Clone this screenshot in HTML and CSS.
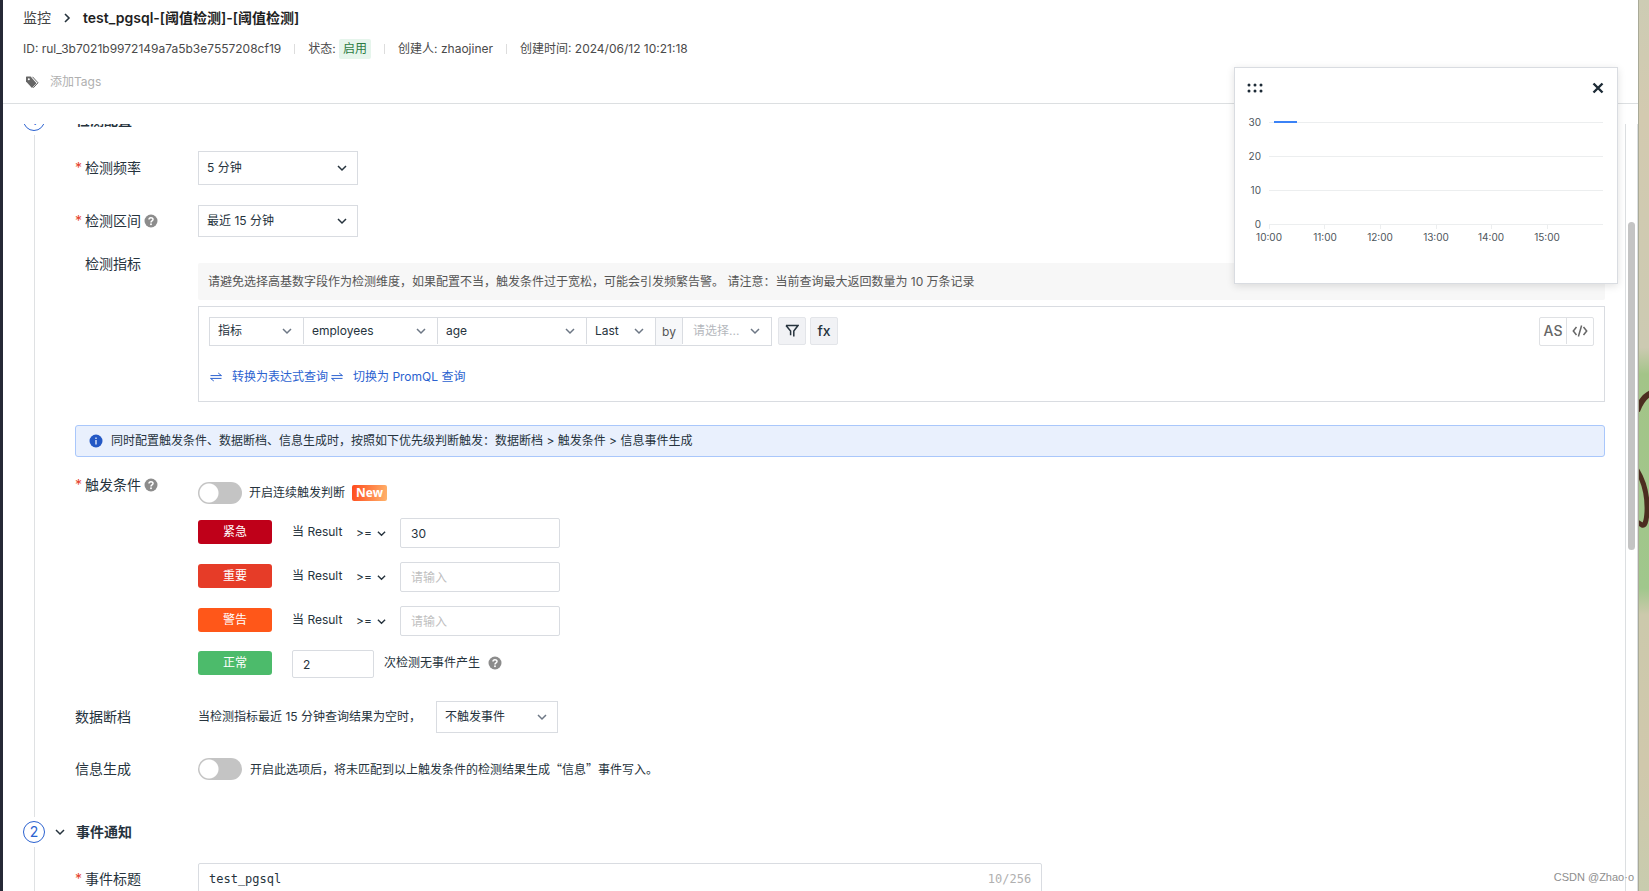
FILE: index.html
```html
<!DOCTYPE html>
<html lang="zh-CN">
<head>
<meta charset="utf-8">
<title>test_pgsql-[阈值检测]-[阈值检测]</title>
<link rel="stylesheet" href="styles.css">
</head>
<body>
<svg class="defs" aria-hidden="true">
  <symbol id="chev" viewBox="0 0 10 10"><path d="M1 3l4 4 4-4" fill="none" stroke="currentColor" stroke-width="1.5"/></symbol>
  <symbol id="help" viewBox="0 0 14 14"><circle cx="7" cy="7" r="6.5" fill="#8c8c8c"/><path d="M5 5.6C5 3.2 9 3.2 9 5.5 9 7 7 6.9 7 8.4" fill="none" stroke="#fff" stroke-width="1.5"/><circle cx="7" cy="10.3" r=".95" fill="#fff"/></symbol>
  <symbol id="swap" viewBox="0 0 12 12"><path d="M.5 4.6h11L8.2 2M11.500 7.400H.5L3.800 10" fill="none" stroke="currentColor" stroke-width="1"/></symbol>
</svg>
<div class="desktop">
  <div class="edge"></div>
  <main class="page">
    <header class="head">
      <nav class="crumbs">
        <a href="#">监控</a>
        <svg class="crumb-arrow" viewBox="0 0 8 12"><path d="M2 2l4 4-4 4" fill="none" stroke="currentColor" stroke-width="1.600"/></svg>
        <h1>test_pgsql-[阈值检测]-[阈值检测]</h1>
      </nav>
      <div class="meta">
        <span>ID: rul_3b7021b9972149a7a5b3e7557208cf19</span>
        <span class="state">状态: <b>启用</b></span>
        <span>创建人: zhaojiner</span>
        <span>创建时间: 2024/06/12 10:21:18</span>
      </div>
      <button class="tags" type="button">
        <svg viewBox="0 0 14 14"><path d="M1 2v4.500l6 6.500 4.500-4.800L5.600 1.500H1.500z" fill="#666"/><path d="M7.500 1.800l5.500 6-4.700 5" fill="none" stroke="#666" stroke-width="1"/><circle cx="3.800" cy="4.300" r="1" fill="#fff"/></svg>
        添加Tags
      </button>
    </header>

    <div class="work">
      <form class="scroller">
        <section class="step">
          <div class="rail"><span class="num">1</span><i></i></div>
          <div class="body">
            <h2><svg class="i10"><use href="#chev"/></svg>检测配置</h2>
            <div class="row freq">
              <label class="req" for="freq">检测频率</label>
              <span class="pick tall"><select id="freq"><option>5 分钟</option></select><svg class="i10"><use href="#chev"/></svg></span>
            </div>
            <div class="row range">
              <label class="req" for="range">检测区间<svg class="help"><use href="#help"/></svg></label>
              <span class="pick"><select id="range"><option>最近 15 分钟</option></select><svg class="i10"><use href="#chev"/></svg></span>
            </div>
            <div class="row top metric">
              <span class="label indent">检测指标</span>
              <div class="metric-body">
                <p class="note">请避免选择高基数字段作为检测维度，如果配置不当，触发条件过于宽松，可能会引发频繁告警。 请注意：当前查询最大返回数量为 10 万条记录</p>
                <div class="query">
                  <div class="query-line">
                    <div class="chain">
                      <span class="pick c1"><select aria-label="类型"><option>指标</option></select><svg class="i10"><use href="#chev"/></svg></span>
                      <span class="pick c2"><select aria-label="指标集"><option>employees</option></select><svg class="i10"><use href="#chev"/></svg></span>
                      <span class="pick c3"><select aria-label="字段"><option>age</option></select><svg class="i10"><use href="#chev"/></svg></span>
                      <span class="pick c4"><select aria-label="聚合"><option>Last</option></select><svg class="i10"><use href="#chev"/></svg></span>
                      <span class="by">by</span>
                      <span class="pick c5"><select aria-label="维度"><option>请选择...</option></select><svg class="i10"><use href="#chev"/></svg></span>
                    </div>
                    <button class="tool" type="button" aria-label="筛选"><svg viewBox="0 0 14 14"><path d="M1 1.500h12L8.800 7v5.500M1 1.500L5.600 7v4.200" fill="none" stroke="currentColor" stroke-width="1.500"/></svg></button>
                    <button class="tool fx" type="button">fx</button>
                    <div class="modes">
                      <button type="button">AS</button>
                      <button type="button" aria-label="代码"><svg viewBox="0 0 16 14"><path d="M4.500 3L1.300 7l3.200 4M11.500 3l3.200 4-3.200 4M9.600 1.500L6.400 12.500" fill="none" stroke="currentColor" stroke-width="1.500"/></svg></button>
                    </div>
                  </div>
                  <div class="links">
                    <a href="#"><svg><use href="#swap"/></svg>转换为表达式查询</a>
                    <a href="#"><svg><use href="#swap"/></svg>切换为 PromQL 查询</a>
                  </div>
                </div>
              </div>
            </div>

            <div class="alert"><svg viewBox="0 0 14 14"><circle cx="7" cy="7" r="6.500" fill="#2458c5"/><path d="M7 6v4.500M7 3.500V5" stroke="#fff" stroke-width="1.200"/></svg>同时配置触发条件、数据断档、信息生成时，按照如下优先级判断触发：数据断档 &gt; 触发条件 &gt; 信息事件生成</div>

            <div class="row top trigger">
              <span class="label req">触发条件<svg class="help"><use href="#help"/></svg></span>
              <div class="rules">
                <div class="toggle"><input class="switch" type="checkbox" role="switch" id="cont"><label for="cont">开启连续触发判断</label><span class="new">New</span></div>
                <div class="rule"><span class="level critical">紧急</span><span class="when">当 Result</span><span class="op"><select aria-label="紧急比较符"><option>&gt;=</option></select><svg class="i10"><use href="#chev"/></svg></span><input class="text" type="text" value="30" aria-label="紧急阈值"></div>
                <div class="rule"><span class="level major">重要</span><span class="when">当 Result</span><span class="op"><select aria-label="重要比较符"><option>&gt;=</option></select><svg class="i10"><use href="#chev"/></svg></span><input class="text" type="text" placeholder="请输入" aria-label="重要阈值"></div>
                <div class="rule"><span class="level warn">警告</span><span class="when">当 Result</span><span class="op"><select aria-label="警告比较符"><option>&gt;=</option></select><svg class="i10"><use href="#chev"/></svg></span><input class="text" type="text" placeholder="请输入" aria-label="警告阈值"></div>
                <div class="rule"><span class="level ok">正常</span><input class="text count" type="text" value="2" id="okn"><label class="after" for="okn">次检测无事件产生<svg class="help"><use href="#help"/></svg></label></div>
              </div>
            </div>

            <div class="row gapdata">
              <label for="nodata">数据断档</label>
              <div class="inline"><span>当检测指标最近 15 分钟查询结果为空时，</span><span class="pick soft"><select id="nodata"><option>不触发事件</option></select><svg class="i10"><use href="#chev"/></svg></span></div>
            </div>
            <div class="row info">
              <span class="label">信息生成</span>
              <div class="toggle"><input class="switch" type="checkbox" role="switch" id="info"><label class="cjk" for="info">开启此选项后，将未匹配到以上触发条件的检测结果生成“信息”事件写入。</label></div>
            </div>
          </div>
        </section>

        <section class="step second">
          <div class="rail"><span class="num">2</span><i></i></div>
          <div class="body">
            <h2><svg class="i10"><use href="#chev"/></svg>事件通知</h2>
            <div class="row">
              <label class="req" for="title">事件标题</label>
              <div class="title-box"><input type="text" id="title" value="test_pgsql"><span>10/256</span></div>
            </div>
          </div>
        </section>
      </form>
      <div class="track"><div class="thumb"></div></div>
    </div>

    <aside class="float">
      <div class="float-bar">
        <svg class="grip" viewBox="0 0 16 10"><g fill="#1d2b36"><circle cx="2" cy="2" r="1.500"/><circle cx="8" cy="2" r="1.500"/><circle cx="14" cy="2" r="1.500"/><circle cx="2" cy="8" r="1.500"/><circle cx="8" cy="8" r="1.500"/><circle cx="14" cy="8" r="1.500"/></g></svg>
        <button type="button" aria-label="关闭"><svg viewBox="0 0 12 12"><path d="M1.500 1.500l9 9M10.500 1.500l-9 9" stroke="#1d2b36" stroke-width="2.400"/></svg></button>
      </div>
      <svg class="chart" viewBox="0 0 360 140" role="img" aria-label="age">
        <g stroke="#eceeef" stroke-width="1"><path d="M22 14.500h334M22 48.500h334M22 82.500h334M22 116.500h334M22.500 116v5M77.500 116v5M133.500 116v5M189.500 116v5M244.500 116v5M300.500 116v5"/></g>
        <path d="M27 14h23" stroke="#3b82f6" stroke-width="2"/>
        <g text-anchor="end"><text x="14" y="18">30</text><text x="14" y="52">20</text><text x="14" y="86">10</text><text x="14" y="120">0</text></g>
        <g text-anchor="middle"><text x="22" y="133">10:00</text><text x="78" y="133">11:00</text><text x="133" y="133">12:00</text><text x="189" y="133">13:00</text><text x="244" y="133">14:00</text><text x="300" y="133">15:00</text></g>
      </svg>
    </aside>
  </main>
  <div class="wallpaper">
    <svg viewBox="0 0 11 160"><path d="M12 9Q3 13-2 27" fill="none" stroke="#4c2d20" stroke-width="6"/><path d="M-2 86Q9 104 8 128Q7 143 3 141Q0 139-2 138" fill="none" stroke="#4c2d20" stroke-width="5"/></svg>
  </div>
  <span class="mark">CSDN @Zhao·o</span>
</div>
</body>
</html>
```
FILE: styles.css
```css
* { box-sizing: border-box; }
body {
  margin: 0;
  color: #26333d;
  font: 12px/20px Inter, "Noto Sans CJK SC", sans-serif;
}
h1, h2, p { margin: 0; }
a { text-decoration: none; }
svg { display: block; flex: none; }
button, input, select { font: inherit; color: inherit; }
button { padding: 0; cursor: pointer; }
.defs { position: absolute; width: 0; height: 0; }
.i10 { width: 10px; height: 10px; }
.help { width: 14px; height: 14px; }

.desktop {
  position: relative;
  display: grid;
  grid-template-columns: 3px 1fr 11px;
  height: 100vh;
  overflow: hidden;
}
.edge { background: #262936; }
.page {
  position: relative;
  display: flex;
  flex-direction: column;
  min-width: 0;
  min-height: 0;
  background: #fff;
}

/* Header */
.head {
  padding: 8px 20px 11px;
  border-bottom: 1px solid #dcdfe1;
}
.crumbs { display: flex; align-items: center; gap: 12px; font-size: 14px; }
.crumbs a { color: #444; }
.crumb-arrow { width: 8px; height: 12px; }
h1 { font-size: 14px; font-weight: 600; color: #1f1f1f; }
.meta { display: flex; margin-top: 11px; color: #4a4a4a; }
.meta span + span { margin-left: 13px; padding-left: 14px; background: linear-gradient(#ddd, #ddd) 0 5px / 1px 10px no-repeat; }
.meta b {
  display: inline-block;
  padding: 0 4px;
  border-radius: 2px;
  background: #e6f5ec;
  color: #2b7a42;
  font-weight: 400;
}
.tags {
  display: flex;
  align-items: center;
  gap: 11px;
  margin-top: 13px;
  padding-left: 2px;
  border: 0;
  background: none;
  color: #b0b0b0;
}
.tags svg { width: 14px; height: 14px; }

/* Scroll area */
.work { display: flex; flex: 1; min-height: 0; margin-top: 20px; }
.scroller {
  flex: 1;
  min-width: 0;
  overflow: hidden;
  padding: 0 20px;
  border-right: 1px solid #dcdfe1;
}
.track { width: 12px; padding: 98px 2px 0; border-right: 1px solid #dcdfe1; }
.thumb { height: 328px; border-radius: 4px; background: #c4c4c4; }

.step { display: grid; grid-template-columns: 22px 1fr; gap: 10px; }
.step:first-child { margin-top: -15px; }
.step:first-child .body { padding-bottom: 40px; }
.rail { display: flex; flex-direction: column; align-items: center; }
.rail i { flex: 1; width: 1px; margin: 4px 0; background: #dfe1e3; }
.num {
  width: 22px;
  height: 22px;
  border: 1px solid #2b62d0;
  border-radius: 50%;
  color: #2b62d0;
  font-size: 14px;
  text-align: center;
}
h2 { display: flex; align-items: center; gap: 11px; font-size: 14px; line-height: 22px; font-weight: 600; }

.row {
  display: grid;
  grid-template-columns: 123px 1fr;
  align-items: center;
  margin-top: 20px;
  padding-left: 20px;
}
.row.top { align-items: start; }
.row > label, .label { display: flex; align-items: center; gap: 3px; font-size: 14px; line-height: 22px; }
.req::before { content: "*"; width: 7px; color: #e5432d; }
.indent { padding-left: 10px; }

.pick { position: relative; display: block; width: 160px; height: 32px; }
.pick.tall { height: 34px; }
.pick select {
  width: 100%;
  height: 100%;
  padding: 0 24px 0 8px;
  border: 1px solid #d9dce1;
  border-radius: 0;
  background: #fff;
  appearance: none;
}
.pick svg { position: absolute; top: calc(50% - 5px); right: 11px; pointer-events: none; }

.row.metric { margin-top: 16px; }
.metric-body { padding-top: 10px; }
.note {
  padding: 9px 10px 8px;
  border-radius: 2px;
  background: #f7f7f7;
  color: #555;
}
.query { margin-top: 6px; padding: 10px 10px 14px; border: 1px solid #d9dce1; }
.query-line { display: flex; gap: 4px; }
.chain { display: flex; margin-right: 2px; border: 1px solid #d9dce1; }
.chain .pick { height: 26px; }
.chain .pick + *, .by + .pick { border-left: 1px solid #d9dce1; }
.chain select { border: 0; }
.chain svg, .soft svg { color: #6d7785; }
.chain .c1 { width: 93px; }
.chain .c2 { width: 134px; }
.chain .c3 { width: 149px; }
.chain .c4 { width: 69px; }
.chain .c5 { width: 89px; color: #b5b8bd; }
.c5 select { padding-left: 10px; }
.by { width: 27px; background: #f7f8fa; color: #555; line-height: 27px; text-align: center; }
.tool {
  display: grid;
  place-items: center;
  width: 28px;
  height: 28px;
  border: 1px solid #e3e5e9;
  border-radius: 2px;
  background: #f1f2f5;
}
.tool svg { width: 14px; height: 14px; }
.fx { font-size: 14px; font-weight: 500; }
.modes { display: flex; margin-left: auto; border: 1px solid #dfe1e4; border-radius: 2px; color: #666; }
.modes button { display: grid; place-items: center; width: 26px; height: 26px; border: 0; background: none; font-size: 14px; font-weight: 500; }
.modes button + button { width: 27px; border-left: 1px solid #dfe1e4; }
.modes svg { width: 16px; height: 14px; }
.links { display: flex; gap: 3px; margin-top: 21px; padding-left: 1px; }
.links a { display: flex; align-items: center; gap: 10px; color: #2b62d0; }
.links svg { width: 12px; height: 12px; }

.alert {
  display: flex;
  align-items: center;
  gap: 8px;
  margin: 23px 0 0 20px;
  padding: 5px 13px;
  border: 1px solid #a9c7fb;
  border-radius: 3px;
  background: #e9f0fd;
}
.alert svg { width: 14px; height: 14px; }

/* Trigger rules */
.row.trigger { margin-top: 17px; }
.rules { display: flex; flex-direction: column; gap: 14px; padding-top: 8px; }
.toggle { display: flex; align-items: center; gap: 7px; }
.switch {
  width: 44px;
  height: 22px;
  margin: 0;
  border-radius: 11px;
  background: radial-gradient(circle at 11px 11px, #fff 9px, #c4c4c4 10px);
  appearance: none;
}
.new {
  padding: 0 4px;
  border-radius: 2px;
  background: linear-gradient(100deg, #ff4a1c, #ffb46c);
  color: #fff;
  font: 700 12px/16px "Open Sans", sans-serif;
}
.cjk { font-family: "Noto Sans CJK SC", sans-serif; }
.rule { display: flex; align-items: center; }
.level, .when, .after { margin-bottom: 2px; }
.level {
  width: 74px;
  margin-right: 20px;
  border-radius: 3px;
  color: #fff;
  line-height: 24px;
  text-align: center;
}
.critical { background: #bf0019; }
.major { background: #e63c28; }
.warn { background: #ff5719; }
.ok { background: #4cbb6b; }
.when { width: 64px; }
.op { position: relative; width: 44px; }
.op select { width: 100%; border: 0; padding: 0; background: none; appearance: none; }
.op svg { position: absolute; top: 6px; right: 14px; pointer-events: none; }
.op .i10 { width: 9px; height: 9px; }
.text {
  width: 160px;
  height: 30px;
  padding: 0 10px;
  border: 1px solid #d9dce1;
  border-radius: 2px;
}
.text::placeholder { color: #bfbfbf; }
.count { width: 82px; height: 28px; }
.after { display: flex; align-items: center; gap: 8px; margin-left: 10px; }

.row.gapdata { margin-top: 23px; }
.inline { display: flex; align-items: center; gap: 15px; }
.inline .pick { width: 122px; }
.row.info { margin-top: 25px; }
.row.info .toggle { gap: 8px; }
.step:first-child .row.info { margin-bottom: 1px; }

.title-box {
  display: flex;
  align-items: center;
  width: 60%;
  height: 32px;
  padding: 0 10px;
  border: 1px solid #d9dce1;
  border-radius: 2px;
  font: 12px/20px "DejaVu Sans Mono", monospace;
}
.title-box input { flex: 1; min-width: 0; padding: 0; border: 0; }
.title-box span { color: #b0b0b0; }

/* Floating preview */
.float {
  position: absolute;
  top: 67px;
  right: 20px;
  width: 384px;
  height: 217px;
  padding: 14px 12px;
  border: 1px solid #d9dce1;
  background: #fff;
  box-shadow: 0 2px 8px rgba(0, 0, 0, .12);
}
.float-bar { display: flex; align-items: center; justify-content: space-between; padding-right: 1px; height: 12px; }
.float-bar button { border: 0; background: none; }
.float-bar button svg { width: 12px; height: 12px; }
.grip { width: 16px; height: 10px; }
.chart { width: 360px; height: 140px; margin-top: 14px; font-size: 10px; fill: #4d555c; }

/* Desktop background strip */
.wallpaper {
  padding-top: 384px;
  overflow: hidden;
  border-left: 1px solid #a9aa98;
  background: linear-gradient(#cdccb4 0, #d3cab0 13%, #cccab2 39%, #a3c488 42%, #a0c78c 66%, #ccc9ac 69%, #d0c8ac 86%, #c8ccae 100%);
}
.wallpaper svg { width: 11px; height: 160px; }
.mark {
  position: absolute;
  right: 15px;
  bottom: 4px;
  color: #8e8e8e;
  font-family: "Liberation Sans", sans-serif;
  font-size: 11px;
}
```
